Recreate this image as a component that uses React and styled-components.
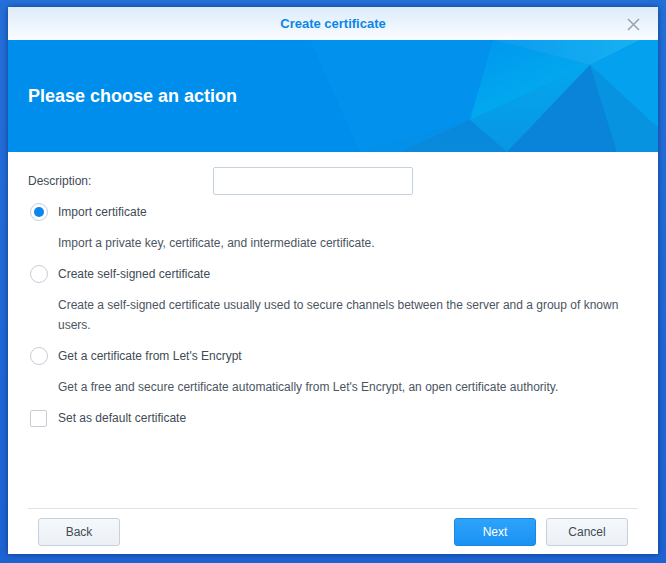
import React, { useState } from 'react';
import styled, { createGlobalStyle } from 'styled-components';

const GlobalStyle = createGlobalStyle`
  html, body {
    margin: 0;
    padding: 0;
    height: 100%;
  }
  body {
    background: linear-gradient(180deg, #2470da 0%, #1e63d3 100%);
    font-family: 'Liberation Sans', Arial, sans-serif;
  }
`;

const Page = styled.div`
  padding: 7px 8px;
  height: 563px;
  box-sizing: border-box;
`;

const Dialog = styled.div`
  width: 650px;
  height: 547px;
  background: #fff;
  display: flex;
  flex-direction: column;
  box-shadow: 0 0 6px rgba(0, 20, 80, 0.55);
`;

const TitleBar = styled.div`
  height: 33px;
  flex: none;
  display: flex;
  align-items: center;
  justify-content: center;
  position: relative;
  background: linear-gradient(180deg, #dcebfa 0%, #fbfdff 100%);
`;

const Title = styled.div`
  color: #0a86e6;
  font-size: 13px;
  font-weight: bold;
  margin-top: -1px;
`;

const CloseButton = styled.button`
  position: absolute;
  right: 17px;
  top: 9px;
  width: 16px;
  height: 16px;
  padding: 0;
  border: 0;
  background: none;
  display: flex;
  align-items: center;
  justify-content: center;
  cursor: pointer;
`;

const Banner = styled.div`
  height: 112px;
  flex: none;
  position: relative;
  overflow: hidden;
  display: flex;
  align-items: center;
  padding-left: 20px;
  background: #008fec;
`;

const BannerArt = styled.svg`
  position: absolute;
  inset: 0;
`;

const Heading = styled.h1`
  position: relative;
  margin: 0;
  color: #fff;
  font-size: 18px;
  font-weight: bold;
`;

const Body = styled.div`
  flex: 1;
  padding: 15px 20px 0 20px;
  color: #414b55;
  font-size: 12px;
`;

const FieldRow = styled.div`
  display: flex;
  align-items: center;
  margin-bottom: 7px;
`;

const FieldLabel = styled.label`
  width: 185px;
`;

const TextInput = styled.input`
  width: 200px;
  height: 28px;
  box-sizing: border-box;
  border: 1px solid #c5d1dc;
  border-radius: 2px;
  outline: none;
  padding: 0 8px;
  font: inherit;
`;

const Options = styled.div`
  display: flex;
  flex-direction: column;
  gap: 11px;
`;

const OptionRow = styled.label`
  display: flex;
  align-items: center;
  height: 20px;
  padding-left: 2px;
  cursor: pointer;
`;

const Radio = styled.span`
  width: 18px;
  height: 18px;
  box-sizing: border-box;
  border-radius: 50%;
  border: 1px solid #c6ced7;
  background: #fff;
  margin-right: 10px;
  display: flex;
  align-items: center;
  justify-content: center;

  &::after {
    content: '';
    width: 10px;
    height: 10px;
    border-radius: 50%;
    background: ${({ checked }) => (checked ? '#0a86f0' : 'transparent')};
  }
`;

const Checkbox = styled.span`
  width: 17px;
  height: 17px;
  box-sizing: border-box;
  border: 1px solid #c6ced7;
  border-radius: 2px;
  background: #fff;
  margin-right: 11px;
`;

const Desc = styled.div`
  padding-left: 30px;
  line-height: 20px;
  color: #4b555f;
  padding-right: 15px;
`;

const Footer = styled.div`
  flex: none;
  margin: 0 20px;
  border-top: 1px solid #e0e3e7;
  padding: 9px 10px 8px;
  display: flex;
  align-items: center;
  gap: 10px;
`;

const Spacer = styled.div`
  flex: 1;
`;

const Button = styled.button`
  width: 82px;
  height: 28px;
  border-radius: 3px;
  font-family: inherit;
  font-size: 12px;
  cursor: pointer;
  border: 1px solid ${({ primary }) => (primary ? '#1888e4' : '#c6d0da')};
  color: ${({ primary }) => (primary ? '#fff' : '#414b55')};
  background: ${({ primary }) =>
    primary
      ? 'linear-gradient(180deg, #2ea3fa 0%, #1a92f2 100%)'
      : 'linear-gradient(180deg, #f5f8fb 0%, #ebf0f5 100%)'};
`;

const options = [
  {
    id: 'import',
    label: 'Import certificate',
    desc: 'Import a private key, certificate, and intermediate certificate.',
  },
  {
    id: 'self',
    label: 'Create self-signed certificate',
    desc: 'Create a self-signed certificate usually used to secure channels between the server and a group of known users.',
  },
  {
    id: 'le',
    label: "Get a certificate from Let's Encrypt",
    desc: "Get a free and secure certificate automatically from Let's Encrypt, an open certificate authority.",
  },
];

// soft faceted backdrop of the header banner
const BannerFacets = () => (
  <BannerArt width="650" height="112" viewBox="0 0 650 112">
    <defs>
      <linearGradient id="fA" x1="0" y1="0" x2="0.6" y2="1">
        <stop offset="0" stopColor="#0096ee" />
        <stop offset="1" stopColor="#02b0ef" />
      </linearGradient>
      <linearGradient id="fB" x1="0" y1="0" x2="1" y2="0">
        <stop offset="0" stopColor="#0a9cee" />
        <stop offset="1" stopColor="#18b0f2" />
      </linearGradient>
      <linearGradient id="fC" x1="0" y1="0" x2="0" y2="1">
        <stop offset="0" stopColor="#04a6ec" />
        <stop offset="1" stopColor="#0896e4" />
      </linearGradient>
      <linearGradient id="fD" x1="0" y1="0" x2="0" y2="1">
        <stop offset="0" stopColor="#0788dc" />
        <stop offset="1" stopColor="#0a8ada" />
      </linearGradient>
    </defs>
    <polygon points="0,0 302,0 352,112 0,112" fill="#008eec" />
    <polygon points="302,0 485,0 462,80 352,112" fill="#0292ee" />
    <polygon points="352,112 462,80 392,112" fill="#0490e8" />
    <polygon points="485,0 582,25 462,80" fill="url(#fA)" />
    <polygon points="485,0 632,0 582,25" fill="url(#fB)" />
    <polygon points="632,0 650,0 650,88 582,25" fill="#04a2ee" />
    <polygon points="462,80 582,25 499,112" fill="url(#fC)" />
    <polygon points="462,80 499,112 392,112" fill="url(#fD)" />
    <polygon points="582,25 609,112 499,112" fill="#0a84d8" />
    <polygon points="582,25 650,88 650,112 609,112" fill="#0893e0" />
  </BannerArt>
);

const App = () => {
  const [action, setAction] = useState('import');
  const [isDefault, setIsDefault] = useState(false);

  return (
    <>
      <GlobalStyle />
      <Page>
        <Dialog>
          <TitleBar>
            <Title>Create certificate</Title>
            <CloseButton aria-label="Close">
              <svg width="13" height="13" viewBox="0 0 13 13">
                <path d="M1 1L12 12M12 1L1 12" stroke="#9ba4ad" strokeWidth="1.6" />
              </svg>
            </CloseButton>
          </TitleBar>
          <Banner>
            <BannerFacets />
            <Heading>Please choose an action</Heading>
          </Banner>
          <Body>
            <FieldRow>
              <FieldLabel htmlFor="desc">Description:</FieldLabel>
              <TextInput id="desc" type="text" />
            </FieldRow>
            <Options>
              {options.map((o) => (
                <React.Fragment key={o.id}>
                  <OptionRow onClick={() => setAction(o.id)}>
                    <Radio checked={action === o.id} />
                    {o.label}
                  </OptionRow>
                  <Desc>{o.desc}</Desc>
                </React.Fragment>
              ))}
              <OptionRow onClick={() => setIsDefault(!isDefault)}>
                <Checkbox />
                Set as default certificate
              </OptionRow>
            </Options>
          </Body>
          <Footer>
            <Button>Back</Button>
            <Spacer />
            <Button primary>Next</Button>
            <Button>Cancel</Button>
          </Footer>
        </Dialog>
      </Page>
    </>
  );
};

export default App;
